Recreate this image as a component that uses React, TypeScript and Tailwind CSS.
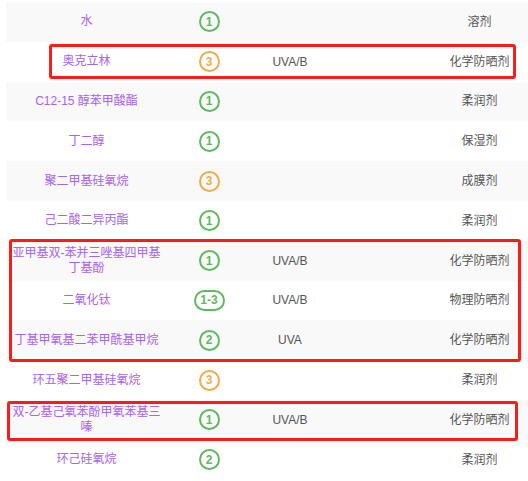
import React from "react";

type Row = {
  name: string;
  score: string;
  tone: "green" | "orange";
  uv: string;
  use: string;
};

const rows: Row[] = [
  { name: "水", score: "1", tone: "green", uv: "", use: "溶剂" },
  { name: "奥克立林", score: "3", tone: "orange", uv: "UVA/B", use: "化学防晒剂" },
  { name: "C12-15 醇苯甲酸酯", score: "1", tone: "green", uv: "", use: "柔润剂" },
  { name: "丁二醇", score: "1", tone: "green", uv: "", use: "保湿剂" },
  { name: "聚二甲基硅氧烷", score: "3", tone: "orange", uv: "", use: "成膜剂" },
  { name: "己二酸二异丙酯", score: "1", tone: "green", uv: "", use: "柔润剂" },
  { name: "亚甲基双-苯并三唑基四甲基丁基酚", score: "1", tone: "green", uv: "UVA/B", use: "化学防晒剂" },
  { name: "二氧化钛", score: "1-3", tone: "green", uv: "UVA/B", use: "物理防晒剂" },
  { name: "丁基甲氧基二苯甲酰基甲烷", score: "2", tone: "green", uv: "UVA", use: "化学防晒剂" },
  { name: "环五聚二甲基硅氧烷", score: "3", tone: "orange", uv: "", use: "柔润剂" },
  { name: "双-乙基己氧苯酚甲氧苯基三嗪", score: "1", tone: "green", uv: "UVA/B", use: "化学防晒剂" },
  { name: "环己硅氧烷", score: "2", tone: "green", uv: "", use: "柔润剂" },
];

const Badge = ({ score, tone }: { score: string; tone: Row["tone"] }) => {
  const color =
    tone === "green"
      ? "border-[#5fb95f] text-[#5fb95f]"
      : "border-[#f0ac4c] text-[#f0ac4c]";
  const shape = score.length > 1 ? "w-[31px] rounded-full" : "w-[21px] rounded-full";
  return (
    <span
      className={`inline-flex h-[21px] items-center justify-center border-2 text-[12px] font-bold leading-none ${shape} ${color}`}
    >
      {score}
    </span>
  );
};

export default function App() {
  return (
    <div
      className="relative h-[481px] w-[528px] overflow-hidden bg-white pt-[2px] pl-[6px]"
      style={{ fontFamily: '"Liberation Sans", "Noto Sans CJK SC", sans-serif' }}
    >
      {rows.map((r, i) => (
        <div
          key={i}
          className={`grid h-[39.8px] grid-cols-[161px_84px_78px_1fr] items-center ${
            i % 2 === 0 ? "bg-[#f9f9f9]" : "bg-white"
          }`}
        >
          <div className="px-[6px] text-center text-[12px] leading-[15px] text-[#a962f2]">
            {r.name}
          </div>
          <div className="flex justify-center">
            <Badge score={r.score} tone={r.tone} />
          </div>
          <div className="text-center text-[12px] text-[#555]">{r.uv}</div>
          <div className="pl-[102px] text-center text-[12px] text-[#555]">{r.use}</div>
        </div>
      ))}

      {/* highlight boxes */}
      <div className="absolute left-[49px] top-[44px] h-[35px] w-[467px] rounded-[3px] border-[3px] border-[#ff1a1a]" />
      <div className="absolute left-[9px] top-[239px] h-[123px] w-[512px] rounded-[3px] border-[3px] border-[#ff1a1a]" />
      <div className="absolute left-[7px] top-[401px] h-[40px] w-[511px] rounded-[3px] border-[3px] border-[#ff1a1a]" />
    </div>
  );
}
